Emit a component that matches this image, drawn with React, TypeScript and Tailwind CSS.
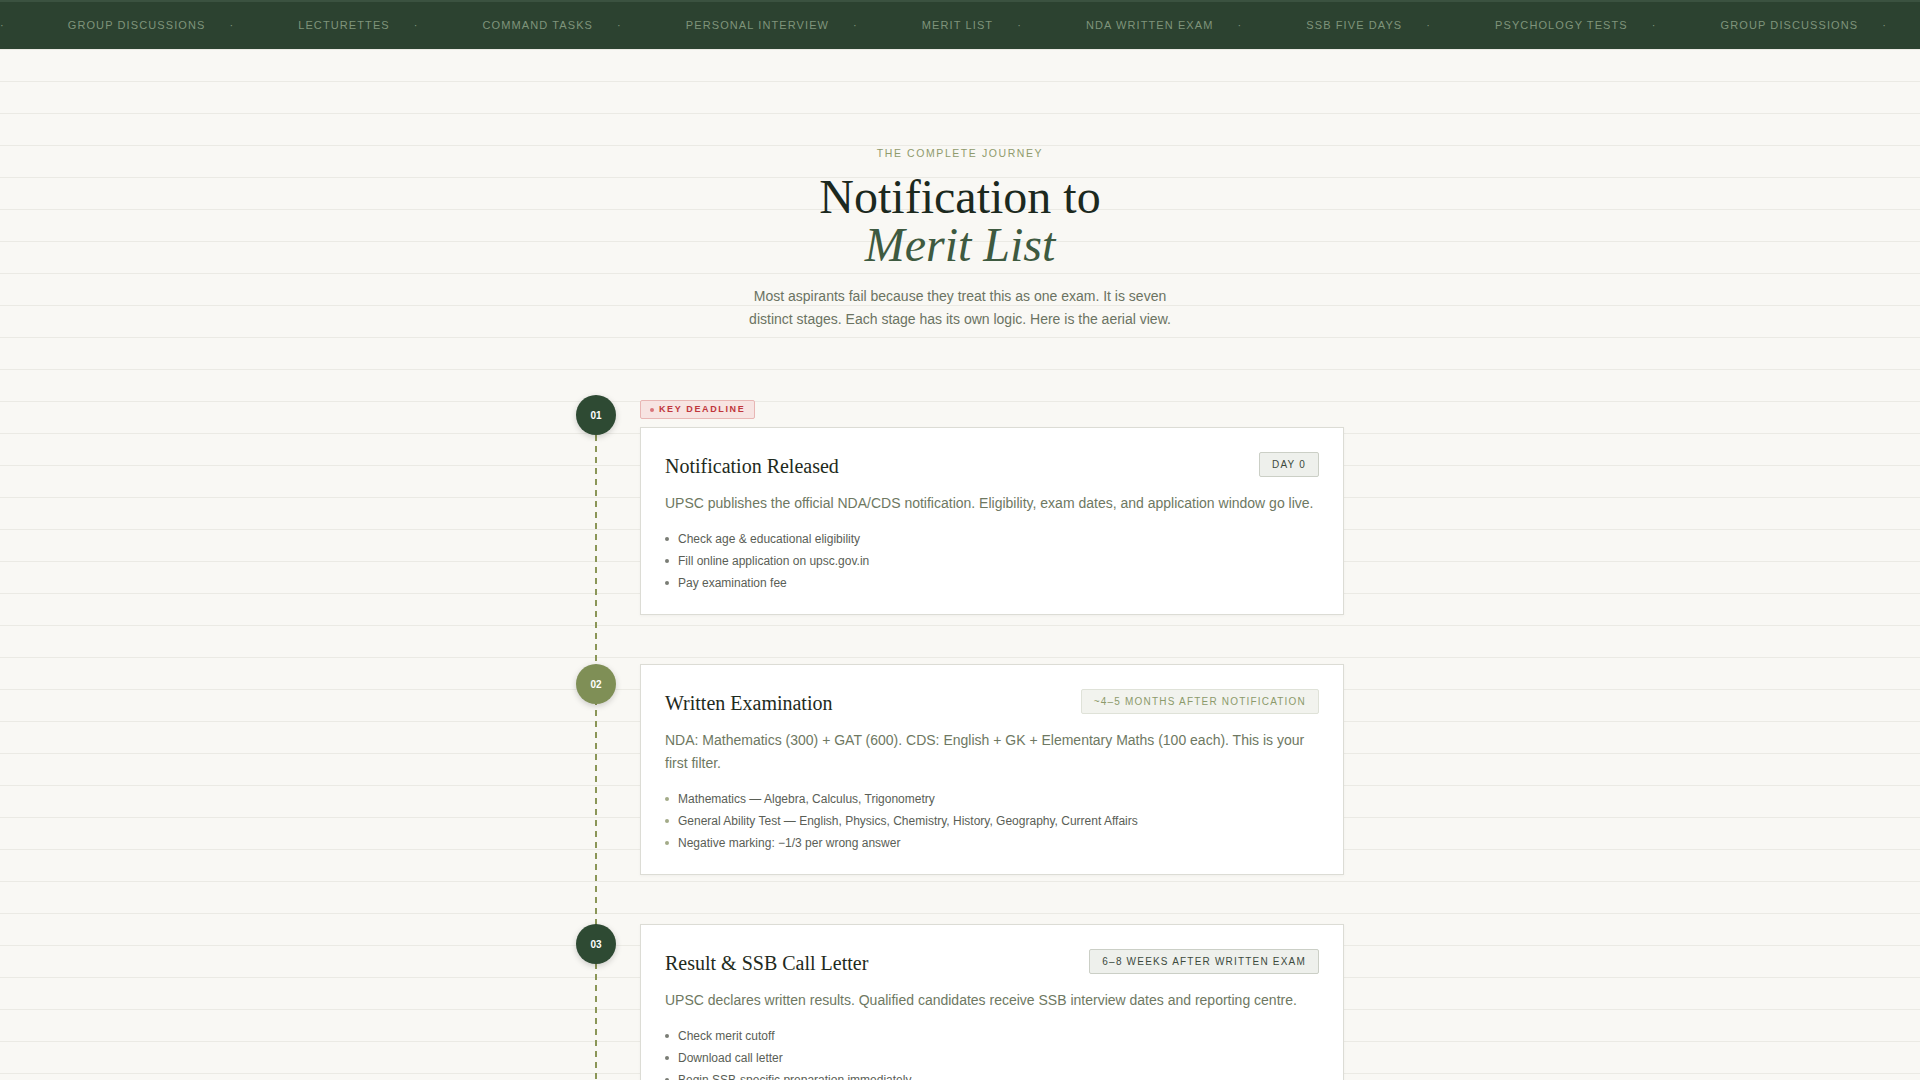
import type { ReactNode } from 'react'

const navItems = [
  'GROUP DISCUSSIONS',
  'LECTURETTES',
  'COMMAND TASKS',
  'PERSONAL INTERVIEW',
  'MERIT LIST',
  'NDA WRITTEN EXAM',
  'SSB FIVE DAYS',
  'PSYCHOLOGY TESTS',
  'GROUP DISCUSSIONS',
  'LECTURETTES',
]

interface Stage {
  num: string
  title: string
  timing: string
  description: string
  points: string[]
  accent: 'dark' | 'olive'
  deadline?: boolean
}

const stages: Stage[] = [
  {
    num: '01',
    title: 'Notification Released',
    timing: 'DAY 0',
    description:
      'UPSC publishes the official NDA/CDS notification. Eligibility, exam dates, and application window go live.',
    points: ['Check age & educational eligibility', 'Fill online application on upsc.gov.in', 'Pay examination fee'],
    accent: 'dark',
    deadline: true,
  },
  {
    num: '02',
    title: 'Written Examination',
    timing: '~4–5 MONTHS AFTER NOTIFICATION',
    description:
      'NDA: Mathematics (300) + GAT (600). CDS: English + GK + Elementary Maths (100 each). This is your first filter.',
    points: [
      'Mathematics — Algebra, Calculus, Trigonometry',
      'General Ability Test — English, Physics, Chemistry, History, Geography, Current Affairs',
      'Negative marking: −1/3 per wrong answer',
    ],
    accent: 'olive',
  },
  {
    num: '03',
    title: 'Result & SSB Call Letter',
    timing: '6–8 WEEKS AFTER WRITTEN EXAM',
    description:
      'UPSC declares written results. Qualified candidates receive SSB interview dates and reporting centre.',
    points: ['Check merit cutoff', 'Download call letter', 'Begin SSB-specific preparation immediately'],
    accent: 'dark',
  },
]

function NavStrip() {
  return (
    <nav className="h-[49px] bg-[#2c4230] border-t-2 border-[#3b5240] overflow-hidden">
      <div className="flex h-full items-center whitespace-nowrap text-[11px] tracking-[0.1em] text-[#7f947b]">
        <span className="mr-[63px]">·</span>
        {navItems.map((item, i) => (
          <span key={i} className="flex items-center">
            <span>{item}</span>
            <span className="ml-[24px] mr-[64px]">·</span>
          </span>
        ))}
      </div>
    </nav>
  )
}

function Badge({ children, tone }: { children: ReactNode; tone: 'dark' | 'olive' }) {
  const cls =
    tone === 'olive'
      ? 'bg-[#f2f3ee] border-[#dfe2d8] text-[#8c9a6b]'
      : 'bg-[#eef0ec] border-[#cbcfc6] text-[#3c4a3d]'
  return (
    <span
      className={`shrink-0 rounded-[2px] border px-3 py-[5px] text-[10px] leading-[13px] tracking-[0.12em] ${cls}`}
    >
      {children}
    </span>
  )
}

function StageItem({ stage }: { stage: Stage }) {
  const circle = stage.accent === 'olive' ? 'bg-[#7f8f56]' : 'bg-[#2e4a33]'
  const bullet = stage.accent === 'olive' ? 'bg-[#a3ab88]' : 'bg-[#7a7d75]'

  return (
    <div className="flex">
      <div className="w-16 shrink-0">
        <div
          className={`relative z-10 flex h-10 w-10 items-center justify-center rounded-full text-[10px] font-bold text-white shadow-[0_2px_6px_rgba(0,0,0,0.18)] ${circle}`}
        >
          {stage.num}
        </div>
      </div>
      <div className="flex-1">
        {stage.deadline && (
          <div className="mt-[5px] mb-2 flex">
            <span className="flex items-center gap-[5px] rounded-[2px] border border-[#e8b6b4] bg-[#f7e4e2] px-[9px] py-[3px] text-[9px] font-bold leading-[11px] tracking-[0.18em] text-[#c0363c]">
              <span className="h-[4px] w-[4px] rounded-full bg-[#d9747a]" />
              KEY DEADLINE
            </span>
          </div>
        )}
        <div className="border border-[#dcdcd5] bg-white px-6 pt-6 pb-[22px] shadow-[0_1px_3px_rgba(0,0,0,0.04)]">
          <div className="flex items-start justify-between gap-6">
            <h3 className="mt-[2px] font-['Liberation_Serif',serif] text-[20px] leading-[25px] text-[#1e2a20]">
              {stage.title}
            </h3>
            <Badge tone={stage.accent}>{stage.timing}</Badge>
          </div>
          <p className="mt-[13px] text-[14px] leading-[23px] text-[#6e7862]">{stage.description}</p>
          <ul className="mt-[15px] space-y-1">
            {stage.points.map(point => (
              <li key={point} className="flex items-center gap-[9px] text-[12px] leading-[18px] text-[#5a5e56]">
                <span className={`h-[4px] w-[4px] shrink-0 rounded-full ${bullet}`} />
                {point}
              </li>
            ))}
          </ul>
        </div>
      </div>
    </div>
  )
}

export default function App() {
  return (
    <div className="min-h-screen bg-[#f9f8f4] font-['Liberation_Sans',Arial,sans-serif]">
      <NavStrip />
      <main className="bg-[repeating-linear-gradient(to_bottom,#ebeae4_0_1px,transparent_1px_32px)] pb-24">
        <header className="pt-24 text-center">
          <p className="text-[10.5px] leading-4 tracking-[0.15em] text-[#909b6c]">THE COMPLETE JOURNEY</p>
          <h1 className="mt-3 font-['Liberation_Serif',serif] text-[48px] leading-[48px] text-[#1c291e]">
            Notification to
            <br />
            <em className="text-[#3e5a40]">Merit List</em>
          </h1>
          <p className="mx-auto mt-4 max-w-[440px] text-[14px] leading-[23px] text-[#6b7362]">
            Most aspirants fail because they treat this as one exam. It is seven distinct stages. Each stage has its
            own logic. Here is the aerial view.
          </p>
        </header>

        <section className="relative mx-auto mt-16 max-w-[768px]">
          <div className="absolute top-[40px] bottom-0 left-[19px] w-[2px] bg-[repeating-linear-gradient(to_bottom,#8b9657_0_6px,transparent_6px_11px)]" />
          <div className="flex flex-col gap-[49px]">
            {stages.map(stage => (
              <StageItem key={stage.num} stage={stage} />
            ))}
          </div>
        </section>
      </main>
    </div>
  )
}
